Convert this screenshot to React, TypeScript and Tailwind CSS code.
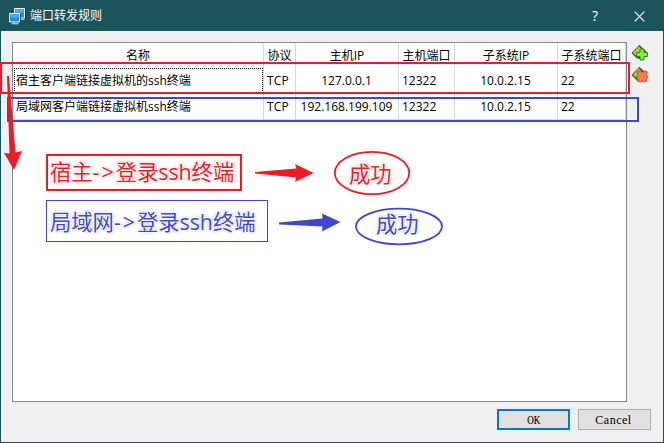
import React from 'react';

const rules = [
  { name: '宿主客户端链接虚拟机的ssh终端', protocol: 'TCP', hostIp: '127.0.0.1', hostPort: '12322', guestIp: '10.0.2.15', guestPort: '22' },
  { name: '局域网客户端链接虚拟机ssh终端', protocol: 'TCP', hostIp: '192.168.199.109', hostPort: '12322', guestIp: '10.0.2.15', guestPort: '22' },
];

const columns = ['名称', '协议', '主机IP', '主机端口', '子系统IP', '子系统端口'];

const grid = 'grid grid-cols-[251px_32px_103px_56px_103px_68px]';
const cell = 'flex items-center border-r border-[#d8d8dc] whitespace-nowrap';
const halo =
  '[text-shadow:1px_0_1px_#fff,-1px_0_1px_#fff,0_1px_1px_#fff,0_-1px_1px_#fff,0_0_3px_#666]';

function MonitorsIcon() {
  return (
    <svg width="17" height="17" viewBox="0 0 17 17" className="ml-2">
      <path d="M5.500.5h10v9.500h-10z" fill="#1e90e8" stroke="#f4f8f8" />
      <path d="M6.500 1.500h8v3h-8z" fill="#50b0f4" />
      <path d="M16.500 1v10" stroke="#10272d" strokeWidth=".7" />
      <path d="M11 11.500h4.500" stroke="#b9c4c6" />
      <path d="M.5 5.500h10V14H.5z" fill="#1e90e8" stroke="#f4f8f8" />
      <path d="M1.500 6.500h8v3h-8z" fill="#50b0f4" />
      <path d="M11.500 6v8.500" stroke="#10272d" strokeWidth=".7" />
      <path d="M2.500 15.700h7" stroke="#b9c4c6" strokeWidth="1.300" />
    </svg>
  );
}

function RuleIcon({ remove = false }: { remove?: boolean }) {
  return (
    <svg width="18" height="18" viewBox="0 0 18 18">
      <path d="M1 8.500L8.500 1l7 7-7 7z" fill="#2b2e2c" />
      <path d="M1.300 8.700L7.700 2l3.200 3.200L5 12.200z" fill={remove ? '#8edb3c' : '#95df42'} stroke="#9b4b25" strokeWidth=".8" />
      <path d="M1 8.800l6 6" stroke="#387a1f" strokeWidth="1.400" />
      <path d="M2 8.700l5.600-6" stroke="#dc563c" strokeWidth="1" strokeDasharray="1.500 1" />
      {remove ? (
        <path
          d="M6 6l2.500-1.300 2.700 1.500 2.600-1.500L16.300 6l-1 2.500 1.500 2.300-1.500 2.700.7 1.500-2.700 1-2.100-1-2.100 1-2.700-1 .3-2-1.200-2.200 1.500-2.300z"
          fill="#ff7950"
          stroke="#d8452a"
        />
      ) : (
        <path d="M9 5h4v3.500h3.500v4H13V16H9v-3.500H5.500v-4H9z" fill="#87ed3c" stroke="#258c17" />
      )}
    </svg>
  );
}

function TitleBar() {
  return (
    <header className="flex h-[30px] items-center bg-[#1c545c] text-white">
      <MonitorsIcon />
      <h1 className="ml-1 text-[12px] leading-[30px]">端口转发规则</h1>
      <span className="mr-[35px] ml-auto w-[8px] text-center text-[14px]">?</span>
      <svg width="11" height="11" viewBox="0 0 11 11" className="mr-[18px]">
        <path d="M.7.7l9.600 9.600M10.300.7L.7 10.300" stroke="#fff" strokeWidth="1.100" />
      </svg>
    </header>
  );
}

function RuleTable() {
  return (
    <section className="h-[360px] w-[615px] border border-[#828790] bg-white">
      <div className={`${grid} h-[25px]`}>
        {columns.map((label) => (
          <div key={label} className={`${cell} justify-center pt-px`}>
            {label}
          </div>
        ))}
      </div>
      {rules.map((rule, index) => (
        <div key={rule.hostIp} className={`${grid} h-[26px] border-b border-[#d8d8dc]`}>
          <div className={`${cell} pl-px`}>
            <span
              className={
                index === 0
                  ? 'flex h-[25px] w-[249px] items-center border border-dotted border-black pl-px'
                  : 'flex h-[25px] w-[249px] items-center border border-transparent pl-px'
              }
            >
              {rule.name}
            </span>
          </div>
          <div className={`${cell} pl-[3px] tracking-[0.2px]`}>{rule.protocol}</div>
          <div className={`${cell} justify-center pr-px`}>{rule.hostIp}</div>
          <div className={`${cell} pl-[3px]`}>{rule.hostPort}</div>
          <div className={`${cell} justify-center pr-px`}>{rule.guestIp}</div>
          <div className={`${cell} pl-[3px]`}>{rule.guestPort}</div>
        </div>
      ))}
    </section>
  );
}

function Annotations() {
  return (
    <div className="pointer-events-none absolute -top-px -left-px h-[443px] w-[664px]">
      <svg width="664" height="443" className="absolute inset-0" fill="none">
        <rect x="8" y="98" width="630" height="23" stroke="#3f48cc" strokeWidth="2" />
        <rect x="1" y="63" width="628" height="30" stroke="#ed1c24" strokeWidth="2" />
        <path d="M7 76l2 0 6.500 76.500 6.500-1.500-8 19-10-17 5.500.5z" fill="#ed1c24" />
        <rect x="47" y="155" width="194" height="35" stroke="#ed1c24" strokeWidth="2" />
        <rect x="46.500" y="200.500" width="221" height="41" stroke="#3f48cc" />
        <path d="M255 172l41.500-3.500-1.500-4.500 18.500 9-18.500 9 1-4.500-41-4z" fill="#ed1c24" />
        <path d="M279 222.500l43.500-4-.5-5 18.500 8.500-18.500 9.500.5-5-43.500-2z" fill="#3f48cc" />
        <ellipse cx="372" cy="173" rx="37.200" ry="21.200" stroke="#ed1c24" strokeWidth="1.800" />
        <ellipse cx="399" cy="226.500" rx="43" ry="17.800" stroke="#3f48cc" strokeWidth="1.800" />
      </svg>
      <p className={`absolute top-[158px] left-[50px] text-[21.3px] leading-[28px] whitespace-nowrap text-[#ed1c24] ${halo}`}>
        宿主<span className="tracking-[2px]">-&gt;</span>登录ssh终端
      </p>
      <p className={`absolute top-[208px] left-[50px] text-[21.3px] leading-[28px] whitespace-nowrap text-[#3f48cc] ${halo}`}>
        局域网<span className="tracking-[2px]">-&gt;</span>登录ssh终端
      </p>
      <p className={`absolute top-[160px] left-[349px] text-[21.3px] leading-[28px] whitespace-nowrap text-[#ed1c24] ${halo}`}>成功</p>
      <p className={`absolute top-[210px] left-[376px] text-[21.3px] leading-[28px] whitespace-nowrap text-[#3f48cc] ${halo}`}>成功</p>
    </div>
  );
}

export default function App() {
  return (
    <div className="relative flex h-[443px] w-[664px] flex-col border border-[#1c545c] bg-[#f0f0f0] font-['Open_Sans','Noto_Sans_CJK_SC',sans-serif] text-[12px] leading-[16px] text-black">
      <TitleBar />
      <main className="flex pt-[11px] pl-[11px]">
        <RuleTable />
        <aside className="flex flex-col gap-[4px] pt-[2px] pl-[4px]">
          <RuleIcon />
          <RuleIcon remove />
        </aside>
      </main>
      <footer className="flex justify-end gap-[8px] pt-[7px] pr-[12px] font-['Liberation_Serif','Noto_Sans_CJK_SC',serif] text-[12px]">
        <button className="h-[21px] w-[73px] border-2 border-[#0078d7] bg-[#e1e1e1] leading-[18px]">
          <span className="inline-block scale-x-75 [-webkit-text-stroke:0.2px_black]">OK</span>
        </button>
        <button className="h-[21px] w-[73px] border border-[#adadad] bg-[#e1e1e1] pr-[2px] leading-[20px] tracking-[0.5px]">Cancel</button>
      </footer>
      <Annotations />
    </div>
  );
}
